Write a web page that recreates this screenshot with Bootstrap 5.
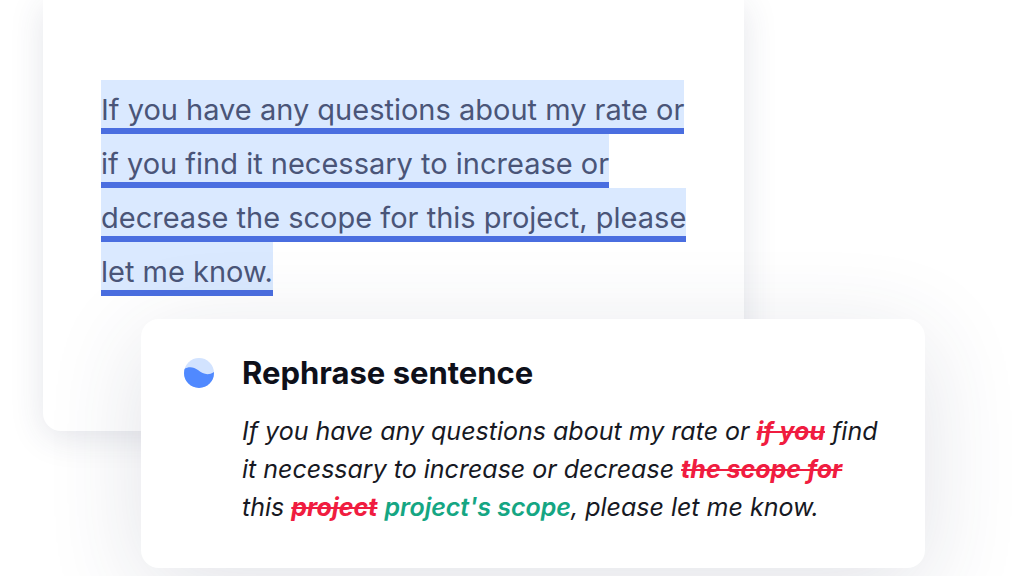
<!DOCTYPE html>
<html lang="en">
<head>
<meta charset="utf-8">
<meta name="viewport" content="width=device-width, initial-scale=1">
<title>Rephrase sentence</title>
<link href="https://cdn.jsdelivr.net/npm/bootstrap@5.3.0/dist/css/bootstrap.min.css" rel="stylesheet">
<style>
body { font-family: Inter, sans-serif; background: #fff; }
.stage { display: grid; grid-template-columns: 43px 98px minmax(0, 603px) minmax(0, 181px) 1fr; grid-template-rows: 319px 112px auto; padding-bottom: 8px; overflow: hidden; }
.sheet { grid-column: 2 / 4; grid-row: 1 / 3; padding: 80px 56px 0 58px; border: 0; border-radius: 0 0 18px 18px; box-shadow: 0 6px 34px rgba(50, 55, 90, .13); }
.draft { font-size: 29px; line-height: 36px; color: #4a5578; }
.draft mark { display: block; width: fit-content; padding: 12px 0 0; white-space: nowrap; color: inherit; background: #dae9ff; border-bottom: 6px solid #4a6ee0; }
.suggestion { grid-column: 3 / 5; grid-row: 2 / 4; z-index: 1; padding: 36px 43px 42px; border: 0; border-radius: 18px; box-shadow: 0 20px 96px rgba(50, 55, 90, .14); }
.suggestion h2 { margin-bottom: 21px; font-size: 31px; line-height: 36px; font-weight: 700; color: #0e101a; }
.rewrite { font-size: 25px; line-height: 38px; font-style: italic; color: #171923; }
.rewrite del { color: #f01c40; font-weight: 700; text-decoration-thickness: 2px; }
.rewrite ins { color: #15a683; font-weight: 600; text-decoration: none; }
</style>
</head>
<body>
<main class="stage">
<article class="card sheet">
<p class="draft mb-0"><mark>If you have any questions about my rate or</mark> <mark>if you find it necessary to increase or</mark> <mark>decrease the scope for this project, please</mark> <mark>let me know.</mark></p>
</article>
<section class="card suggestion">
<div class="d-flex">
<svg class="flex-shrink-0 me-4" width="34" height="36" viewBox="0 0 34 36" aria-hidden="true"><clipPath id="disc"><circle cx="15" cy="18" r="15"/></clipPath><g clip-path="url(#disc)"><path d="M0 3H30V33H0Z" fill="#d2e3ff"/><path d="M0 14C5 11 10 12 14 15C19 19 24 21 30 17V33H0Z" fill="#5089ff"/></g></svg>
<div class="text-nowrap">
<h2>Rephrase sentence</h2>
<p class="rewrite mb-0">If you have any questions about my rate or <del>if you</del> find<br>it necessary to increase or decrease <del>the scope for</del><br>this <del>project</del> <ins>project's scope</ins>, please let me know.</p>
</div>
</div>
</section>
</main>
<script src="https://cdn.jsdelivr.net/npm/bootstrap@5.3.0/dist/js/bootstrap.bundle.min.js"></script>
</body>
</html>
